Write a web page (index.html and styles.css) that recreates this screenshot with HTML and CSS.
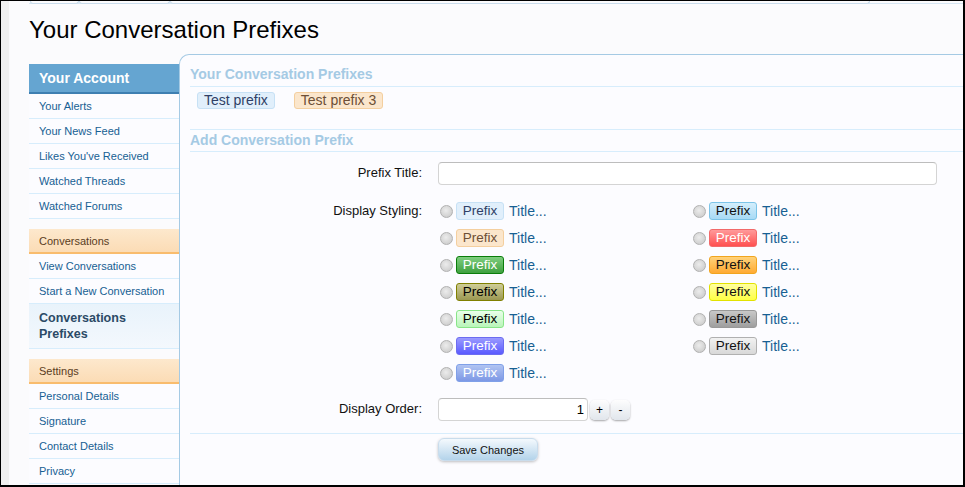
FILE: index.html
```html
<!DOCTYPE html>
<html>
<head>
<meta charset="utf-8">
<link rel="stylesheet" href="styles.css">
</head>
<body>
<div class="screen">
  <div class="gutter"></div>
  <div class="page">
    <div class="tabs"><span class="tab t1"></span><span class="tab t2"></span><span class="tab t3"></span></div>
    <h1 class="title">Your Conversation Prefixes</h1>
    <div class="layout">
      <nav class="sidebar">
        <div class="sb-head">Your Account</div>
        <a class="sb-item">Your Alerts</a>
        <a class="sb-item">Your News Feed</a>
        <a class="sb-item">Likes You've Received</a>
        <a class="sb-item">Watched Threads</a>
        <a class="sb-item">Watched Forums</a>
        <div class="sb-section">Conversations</div>
        <a class="sb-item">View Conversations</a>
        <a class="sb-item">Start a New Conversation</a>
        <a class="sb-item selected">Conversations Prefixes</a>
        <div class="sb-section">Settings</div>
        <a class="sb-item">Personal Details</a>
        <a class="sb-item">Signature</a>
        <a class="sb-item">Contact Details</a>
        <a class="sb-item">Privacy</a>
      </nav>
      <main class="panel">
        <h3 class="ph">Your Conversation Prefixes</h3>
        <div class="chips">
          <span class="chip primary">Test prefix</span>
          <span class="chip secondary">Test prefix 3</span>
        </div>
        <h3 class="ph ph2">Add Conversation Prefix</h3>
        <div class="row r-title">
          <label class="lbl">Prefix Title:</label>
          <div class="ctrl"><input class="text-in" type="text"></div>
        </div>
        <div class="row r-style">
          <label class="lbl lbl-style">Display Styling:</label>
          <div class="ctrl styles">
            <div class="opt"><span class="radio"></span><span class="pfx primary">Prefix</span><span class="ttl">Title...</span></div>
            <div class="opt"><span class="radio"></span><span class="pfx secondary">Prefix</span><span class="ttl">Title...</span></div>
            <div class="opt"><span class="radio"></span><span class="pfx green">Prefix</span><span class="ttl">Title...</span></div>
            <div class="opt"><span class="radio"></span><span class="pfx olive">Prefix</span><span class="ttl">Title...</span></div>
            <div class="opt"><span class="radio"></span><span class="pfx lightgreen">Prefix</span><span class="ttl">Title...</span></div>
            <div class="opt"><span class="radio"></span><span class="pfx blue">Prefix</span><span class="ttl">Title...</span></div>
            <div class="opt"><span class="radio"></span><span class="pfx royal">Prefix</span><span class="ttl">Title...</span></div>
            <div class="opt"><span class="radio"></span><span class="pfx sky">Prefix</span><span class="ttl">Title...</span></div>
            <div class="opt"><span class="radio"></span><span class="pfx red">Prefix</span><span class="ttl">Title...</span></div>
            <div class="opt"><span class="radio"></span><span class="pfx orange">Prefix</span><span class="ttl">Title...</span></div>
            <div class="opt"><span class="radio"></span><span class="pfx yellow">Prefix</span><span class="ttl">Title...</span></div>
            <div class="opt"><span class="radio"></span><span class="pfx gray">Prefix</span><span class="ttl">Title...</span></div>
            <div class="opt"><span class="radio"></span><span class="pfx silver">Prefix</span><span class="ttl">Title...</span></div>
          </div>
        </div>
        <div class="row r-order">
          <label class="lbl">Display Order:</label>
          <div class="ctrl spin">
            <input class="num-in" type="text" value="1">
            <button class="spin-btn">+</button>
            <button class="spin-btn">-</button>
          </div>
        </div>
        <div class="divider"></div>
        <div class="submit"><button class="save">Save Changes</button></div>
      </main>
    </div>
  </div>
</div>
</body>
</html>
```

FILE: styles.css
```css
* { box-sizing: border-box; }
html, body { margin: 0; padding: 0; }
body {
  font-family: "Liberation Sans", Arial, sans-serif;
  background: #fbfbfd;
}
.screen {
  width: 965px;
  height: 487px;
  border: 1px solid #000;
  border-right-width: 2px;
  border-bottom-width: 2px;
  display: flex;
  overflow: hidden;
}
.gutter {
  width: 8px;
  flex: none;
  background: #f0f0f0;
}
.page {
  flex: 1;
  background: #fbfbfd;
  padding-left: 20px;
  min-width: 0;
}
.tabs {
  display: flex;
  height: 3px;
  border-bottom: 1px solid #d6e6f3;
}
.tab {
  height: 3px;
  border: 1px solid #c9dcec;
  border-top: none;
  border-radius: 0 0 4px 4px;
  background: #fbfbfd;
}
.t1 { width: 49px; margin-left: 1px; }
.t2 { width: 91px; }
.t3 { width: 700px; }

.title {
  margin: 11px 0 0;
  font-size: 24px;
  line-height: 30px;
  font-weight: normal;
  color: #000;
}
.layout {
  display: flex;
  align-items: flex-start;
  margin-top: 9px;
}
.sidebar {
  width: 150px;
  flex: none;
  margin-top: 10px;
  display: flex;
  flex-direction: column;
}
.sb-head {
  height: 30px;
  background: #65a5d1;
  border-bottom: 2px solid #3e7fb1;
  color: #fff;
  font-weight: bold;
  font-size: 14px;
  line-height: 29px;
  padding-left: 10px;
}
.sb-item {
  display: block;
  height: 25px;
  line-height: 24px;
  border-bottom: 1px solid #d7edfc;
  font-size: 11px;
  color: #176093;
  padding-left: 10px;
  background: #fcfcff;
}
.sb-item.selected {
  height: auto;
  padding: 6px 10px 6px 10px;
  line-height: 16px;
  font-size: 12.5px;
  font-weight: bold;
  color: #2b4a66;
  background: linear-gradient(to bottom, #e9f3fb, #f3f8fd);
}
.sb-section {
  margin-top: 10px;
  height: 25px;
  line-height: 24px;
  padding-left: 10px;
  font-size: 11px;
  color: #5a3d1e;
  background: linear-gradient(to bottom, #fde8cd, #fbdcb5);
  border-bottom: 2px solid #f9bc6d;
}
.panel {
  flex: 1;
  margin-right: -30px;
  height: 440px;
  background: #fcfcff;
  border: 1px solid #a5cae4;
  border-right: none;
  border-bottom: none;
  border-top-left-radius: 10px;
  padding: 9px 0 0 10px;
}
.ph {
  margin: 0;
  font-size: 14px;
  font-weight: bold;
  color: #a5cae4;
  line-height: 20px;
  padding-bottom: 2px;
  border-bottom: 1px solid #d7edfc;
}
.ph2 {
  border-top: 1px solid #d7edfc;
  padding-bottom: 1px;
}
.chips {
  display: flex;
  gap: 19px;
  padding: 5px 0 0 7px;
  height: 42px;
}
.chip {
  display: inline-block;
  height: 17px;
  line-height: 15px;
  font-size: 14px;
  padding: 0 6px;
  border-radius: 3px;
  border-width: 1px;
  border-style: solid;
}
.pfx {
  width: 48px;
  height: 18px;
  line-height: 16px;
  text-align: center;
  font-size: 13.5px;
  border-width: 1px;
  border-style: solid;
  border-radius: 3px;
  flex: none;
}
.primary { background: #e1effb; border-color: #c7e1f5; color: #2f3f66; }
.secondary { background: #fbe6cc; border-color: #f4cf9f; color: #6d4f36; }

.row {
  display: flex;
  align-items: flex-start;
}
.lbl {
  width: 232px;
  flex: none;
  text-align: right;
  font-size: 13px;
  color: #111;
  line-height: 22px;
}
.ctrl { margin-left: 16px; }
.r-title { margin-top: 10px; }
.text-in {
  width: 499px;
  height: 23px;
  border: 1px solid #d4d4d4;
  border-top-color: #bdbdbd;
  border-radius: 4px;
  background: #fff;
  font: 13px "Liberation Sans", Arial, sans-serif;
  display: block;
}
.r-style { margin-top: 14px; }
.lbl-style { line-height: 24px; }
.styles {
  display: grid;
  grid-template-columns: 253px 253px;
  grid-template-rows: repeat(7, 27px);
  grid-auto-flow: column;
}
.opt {
  display: flex;
  align-items: center;
  height: 24px;
}
.radio {
  width: 13px;
  height: 13px;
  border-radius: 50%;
  border: 1px solid #b1b1b1;
  background: radial-gradient(circle at 45% 40%, #ececec, #cfcfcf 75%);
  margin-left: 2px;
  margin-right: 3px;
  flex: none;
}
.ttl {
  margin-left: 5px;
  font-size: 14px;
  color: #176093;
}
.green { background: linear-gradient(#7fce7f, #3fa03f); border-color: #0a7d0a; color: #fff; }
.olive { background: linear-gradient(#cfcd97, #9b9852); border-color: #808000; color: #000; }
.lightgreen { background: linear-gradient(#eaffea, #b9f5b9); border-color: #88e588; color: #000; }
.blue { background: linear-gradient(#9a9aff, #5a5aff); border-color: #6c6cf0; color: #fff; }
.royal { background: linear-gradient(#b1c4f2, #7d98e5); border-color: #80a0e8; color: #fff; }
.sky { background: linear-gradient(#d3eefc, #a8daf5); border-color: #7cc4e8; color: #111; }
.red { background: linear-gradient(#ff9a9a, #ff5050); border-color: #f26a6a; color: #fff; }
.orange { background: linear-gradient(#ffd27a, #ffaa33); border-color: #f1a51f; color: #111; }
.yellow { background: linear-gradient(#ffffa0, #ffff44); border-color: #e2e200; color: #111; }
.gray { background: linear-gradient(#c8c8c8, #9e9e9e); border-color: #999; color: #111; }
.silver { background: linear-gradient(#f2f2f2, #d8d8d8); border-color: #b0b0b0; color: #111; }

.r-order { margin-top: 10px; }
.spin { display: flex; align-items: center; gap: 2px; }
.num-in {
  width: 150px;
  height: 23px;
  border: 1px solid #d4d4d4;
  border-top-color: #bdbdbd;
  border-radius: 4px;
  background: #fff;
  text-align: right;
  padding-right: 3px;
  font: 13px "Liberation Sans", Arial, sans-serif;
  color: #000;
}
.spin-btn {
  width: 19px;
  height: 20px;
  padding: 0;
  border: none;
  border-radius: 5px;
  background: linear-gradient(#fdfdfd, #e1e6ec);
  box-shadow: 0 1px 2px rgba(0,0,0,0.35);
  font: 12px "Liberation Sans", Arial, sans-serif;
  color: #000;
}
.divider {
  margin-top: 12px;
  border-top: 1px solid #d7edfc;
}
.submit {
  padding: 4px 0 0 248px;
}
.save {
  width: 100px;
  height: 23px;
  border: 1px solid #c9dcec;
  border-radius: 6px;
  background: linear-gradient(#f4f9fd, #b3d3ea);
  box-shadow: 0 1px 3px rgba(0,0,0,0.25);
  font: 11px "Liberation Sans", Arial, sans-serif;
  color: #111;
  padding: 0;
}
```
